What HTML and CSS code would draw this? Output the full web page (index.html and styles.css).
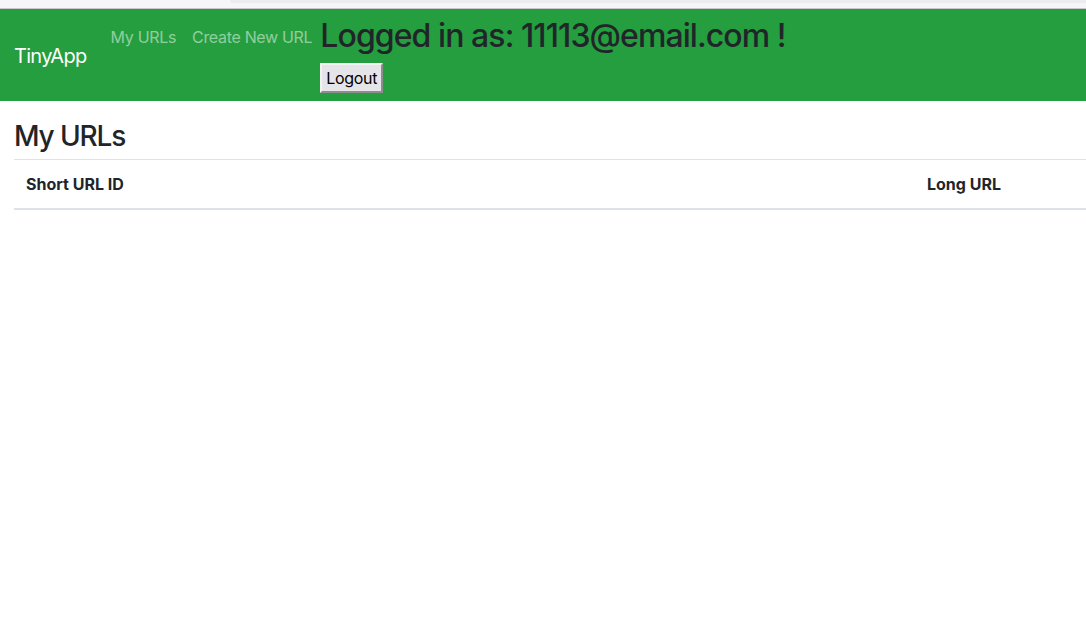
FILE: index.html
```html
<!DOCTYPE html>
<html lang="en">
<head>
<meta charset="utf-8">
<title>TinyApp</title>
<link rel="stylesheet" href="styles.css">
</head>
<body>
<div class="chrome">
  <div class="chrome-left"></div>
  <div class="chrome-bar"></div>
</div>
<nav class="navbar">
  <a class="brand" href="#">TinyApp</a>
  <div class="collapse">
    <ul class="nav">
      <li><a class="nav-link" href="#">My URLs</a></li>
      <li><a class="nav-link" href="#">Create New URL</a></li>
    </ul>
    <div class="user">
      <h2 class="user-title">Logged in as: 11113@email.com !</h2>
      <form class="logout-form">
        <button type="button" class="logout">Logout</button>
      </form>
    </div>
  </div>
</nav>
<main class="container">
  <h3 class="page-title">My URLs</h3>
  <table class="table">
    <thead>
      <tr>
        <th class="col-short">Short URL ID</th>
        <th class="col-long">Long URL</th>
      </tr>
    </thead>
    <tbody></tbody>
  </table>
</main>
</body>
</html>
```
FILE: styles.css
```css
* { box-sizing: border-box; }
html, body { margin: 0; padding: 0; }
body {
  font-family: Inter, "Noto Sans", "Liberation Sans", sans-serif;
  font-size: 16px;
  line-height: 1.5;
  color: #212529;
  background: #fff;
  letter-spacing: -0.02em;
}
.chrome {
  display: flex;
  height: 9px;
  background: #f6f6f8;
  border-bottom: 1px solid #c9c9cc;
}
.chrome-left { width: 230px; }
.chrome-bar {
  flex: 1;
  height: 3px;
  background: #ececf0;
  border-bottom-left-radius: 5px;
}
.navbar {
  display: flex;
  align-items: center;
  background: #249e3e;
  padding: 8px 14px;
}
.brand {
  color: #fff;
  text-decoration: none;
  font-size: 20px;
  line-height: 30px;
  letter-spacing: -0.035em;
  padding: 6px 0 4px;
  margin-right: 16px;
}
.collapse {
  display: flex;
  align-items: flex-start;
}
.nav {
  display: flex;
  list-style: none;
  margin: 0;
  padding: 0;
}
.nav-link {
  display: block;
  padding: 8px;
  color: rgba(255, 255, 255, 0.5);
  text-decoration: none;
}
.user-title {
  margin: 0 0 8px;
  font-size: 32px;
  font-weight: 500;
  line-height: 1.2;
  letter-spacing: -0.029em;
  color: #212529;
}
.logout-form { margin: 0; }
.logout {
  font-family: inherit;
  font-size: 16px;
  line-height: 24px;
  letter-spacing: -0.02em;
  color: #000;
  background: #e5e5e9;
  padding: 1px 4px;
  border-width: 2px;
  border-style: solid;
  border-color: #f2f2f2 #8d8d8d #8d8d8d #f2f2f2;
  border-radius: 0;
  display: block;
}
.container {
  padding: 19px 0 0 14px;
}
.page-title {
  margin: 0 0 5px;
  font-size: 28px;
  font-weight: 500;
  line-height: 1.2;
  letter-spacing: -0.04em;
}
.table {
  width: 100%;
  border-collapse: collapse;
}
.table th {
  text-align: left;
  padding: 12px;
  font-weight: 700;
  letter-spacing: 0;
  border-top: 1px solid #dee2e6;
  border-bottom: 2px solid #dee2e6;
  vertical-align: bottom;
}
.col-short { width: 901px; }
```
